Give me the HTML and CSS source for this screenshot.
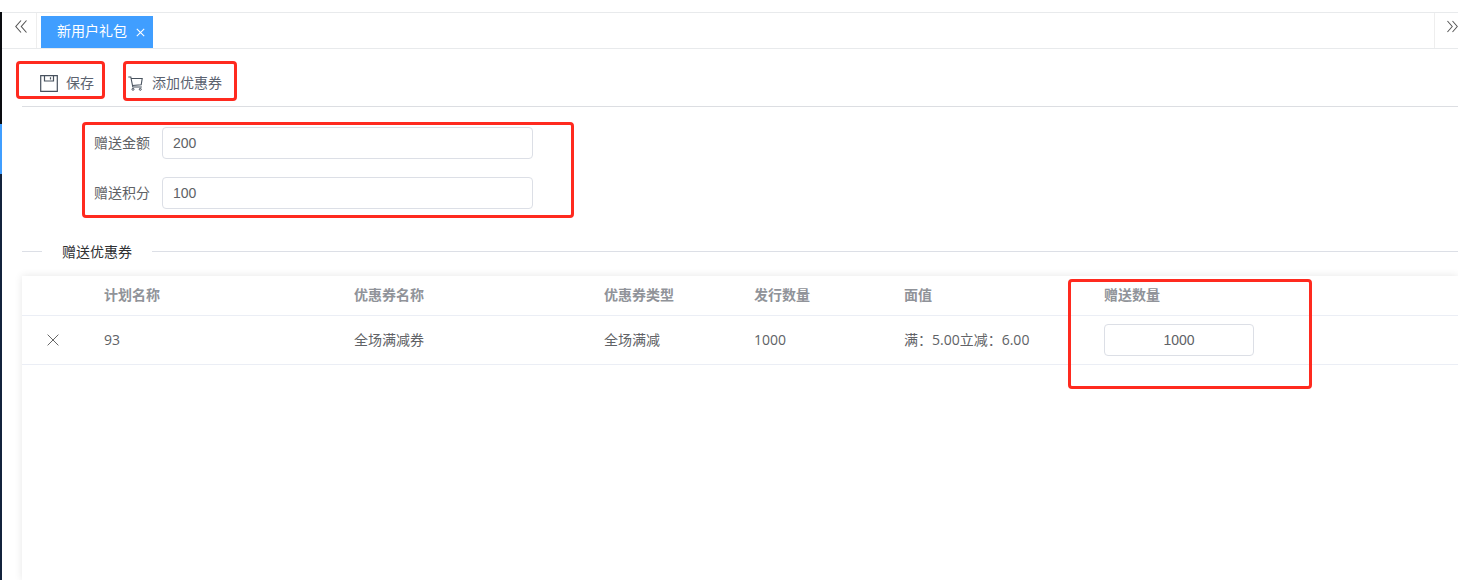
FILE: index.html
```html
<!DOCTYPE html>
<html lang="zh">
<head>
<meta charset="utf-8">
<title>新用户礼包</title>
<link rel="stylesheet" href="styles.css">
</head>
<body>
<div class="page">
  <aside class="rail"><div class="rail-gap"></div><div class="rail-black"></div><div class="rail-active"></div><div class="rail-navy"></div></aside>
  <main class="main">
    <nav class="tabs">
      <button class="tab-arrow left" aria-label="prev"><svg width="12" height="13" viewBox="0 0 12 13"><path d="M6 .5 .8 6.500 6 12.500M11.500 .5 6.300 6.500l5.200 6" fill="none" stroke="#555" stroke-width="1.100"/></svg></button>
      <div class="tab"><span>新用户礼包</span><svg width="9" height="9" viewBox="0 0 9 9"><path d="M.8.8l7.400 7.400M8.200.8.800 8.200" stroke="#fff" stroke-width="1.100"/></svg></div>
      <div class="tab-space"></div>
      <button class="tab-arrow right" aria-label="next"><svg width="12" height="13" viewBox="0 0 12 13"><path d="M.5 .5l5.200 6-5.200 6M6 .5l5.200 6-5.200 6" fill="none" stroke="#555" stroke-width="1.100"/></svg></button>
    </nav>
    <div class="content">
      <div class="toolbar">
        <span class="tool save"><svg width="18" height="17" viewBox="0 0 18 17"><path d="M.7.7h16.600v15.600H.7zM4.500.7v5.300h9V.7M10.500 2.200v2.300" fill="none" stroke="#48525e" stroke-width="1.200"/></svg>保存</span>
        <span class="tool cart"><svg width="15" height="15" viewBox="0 0 15 15"><path d="M.3 1h2.500l2 10h9M3.200 2.500h11l-1 6.300-8.900.7" fill="none" stroke="#48525e" stroke-width="1.100"/><circle cx="5" cy="13.300" r="1" fill="none" stroke="#48525e"/><circle cx="12.300" cy="13.300" r="1" fill="none" stroke="#48525e"/></svg>添加优惠券</span>
      </div>
      <form class="form">
        <label class="field"><span>赠送金额</span><input value="200"></label>
        <label class="field"><span>赠送积分</span><input value="100"></label>
      </form>
      <div class="divider"><span>赠送优惠券</span></div>
      <section class="table">
        <div class="row head"><div></div><div>计划名称</div><div>优惠券名称</div><div>优惠券类型</div><div>发行数量</div><div>面值</div><div>赠送数量</div></div>
        <div class="row body">
          <div class="x"><svg width="12" height="12" viewBox="0 0 12 12"><path d="M.6.6l10.800 10.800M11.400.6.600 11.400" stroke="#666" stroke-width="1"/></svg></div>
          <div>93</div><div>全场满减券</div><div>全场满减</div><div>1000</div><div>满：5.00立减：6.00</div>
          <div><input class="qty" value="1000"></div>
        </div>
      </section>
    </div>
  </main>
  <div class="mark m1"></div>
  <div class="mark m2"></div>
  <div class="mark m3"></div>
  <div class="mark m4"></div>
</div>
</body>
</html>
```
FILE: styles.css
```css
* { box-sizing: border-box; }
html, body { margin: 0; height: 100%; overflow: hidden; background: #fff; }
body { font: 14px/20px "Liberation Sans", "Noto Sans CJK SC", sans-serif; color: #606266; }
.page { display: flex; width: 1458px; height: 580px; position: relative; overflow: hidden; }
.rail { width: 2px; flex: none; display: flex; flex-direction: column; }
.rail-gap { height: 12px; background: #fff; }
.rail-black { height: 112px; background: #0a0c10; }
.rail-active { height: 50px; background: #409eff; }
.rail-navy { flex: 1; background: #13233c; }
.main { flex: 1; min-width: 0; padding-top: 12px; display: flex; flex-direction: column; }
.tabs { height: 37px; flex: none; display: flex; border-top: 1px solid #e8eaec; border-bottom: 1px solid #e8eaec; }
.tab-arrow { width: 35px; flex: none; padding: 0 0 8px; border: 0; background: none; display: flex; align-items: center; }
.tab-arrow.left { border-right: 1px solid #eeeeee; padding-left: 13px; }
.tab-arrow.right { width: 24px; border-left: 1px solid #eeeeee; padding-left: 12px; }
.tab { margin: 3px 0 0 4px; width: 112px; height: 32px; background: #409eff; color: #fff; display: flex; align-items: center; padding: 0 0 2px 16px; gap: 9px; }
.tab svg { margin-top: 2px; }
.tab-space { flex: 1; }
.content { flex: 1; min-height: 0; padding-left: 20px; display: flex; flex-direction: column; }
.toolbar { height: 58px; flex: none; display: flex; border-bottom: 1px solid #dcdee2; padding-left: 18px; padding-top: 24px; gap: 34px; }
.tool { display: flex; align-items: center; height: 20px; color: #5c6370; }
.save svg { margin-right: 8px; }
.cart { gap: 9px; }
.cart svg { margin-top: 1px; }
.form { padding: 20px 0 0 72px; display: flex; flex-direction: column; gap: 18px; }
.field { display: flex; align-items: center; gap: 12px; }
.field input { width: 371px; height: 32px; border: 1px solid #dcdfe6; border-radius: 4px; padding: 0 10px; font: inherit; color: #606266; outline: 0; }
.divider { margin-top: 32px; display: flex; align-items: center; height: 20px; color: #303133; }
.divider::before { content: ""; width: 20px; height: 1px; background: #dcdfe6; }
.divider::after { content: ""; flex: 1; height: 1px; background: #dcdfe6; }
.divider span { padding: 2px 20px 0; }
.table { margin-top: 15px; flex: 1; background: #fff; box-shadow: 0 0 8px rgba(0, 0, 0, .1); }
.row { display: grid; grid-template-columns: 82px 250px 250px 150px 150px 200px 1fr; align-items: center; border-bottom: 1px solid #ebeef5; }
.head { height: 40px; padding-bottom: 2px; color: #909399; font-weight: 700; }
.body { height: 49px; font-family: "Open Sans", "Noto Sans CJK SC", sans-serif; }
.x { display: flex; justify-content: center; width: 62px; }
.x svg { display: block; }
.qty { width: 150px; height: 32px; border: 1px solid #dcdfe6; border-radius: 4px; text-align: center; font: 14px/20px "Liberation Sans", sans-serif; color: #606266; outline: 0; display: block; }
.mark { position: absolute; border: 3px solid #ff2a1f; border-radius: 4px; }
.m1 { left: 16px; top: 61px; width: 89px; height: 38px; }
.m2 { left: 123px; top: 61px; width: 114px; height: 40px; }
.m3 { left: 82px; top: 122px; width: 492px; height: 96px; }
.m4 { left: 1068px; top: 279px; width: 244px; height: 110px; }
```
